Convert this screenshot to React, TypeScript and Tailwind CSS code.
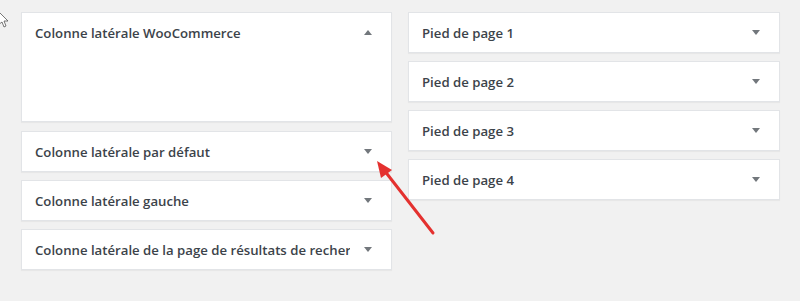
import React from "react";

const font = { fontFamily: '"Open Sans", "Noto Sans", sans-serif' };

function Caret({ up }: { up?: boolean }) {
  return (
    <svg width="8" height="5" viewBox="0 0 8 5" className="shrink-0">
      {up ? <path d="M0 5 L4 0 L8 5 Z" fill="#72777c" /> : <path d="M0 0 L8 0 L4 5 Z" fill="#72777c" />}
    </svg>
  );
}

function Widget({ title, open, body }: { title: string; open?: boolean; body?: number }) {
  return (
    <div className="bg-white border border-[#e2e4e7] shadow-[0_1px_1px_rgba(0,0,0,0.04)]">
      <div className="flex h-[39px] items-center gap-[14px] pl-[13px] pr-[19px]">
        <h3 className="min-w-0 flex-1 overflow-hidden whitespace-nowrap pt-[3px] text-[13.2px] font-semibold text-[#3c434a]">{title}</h3>
        <Caret up={open} />
      </div>
      {body ? <div style={{ height: body }} /> : null}
    </div>
  );
}

export default function App() {
  const left = ["Colonne latérale par défaut", "Colonne latérale gauche", "Colonne latérale de la page de résultats de recherche"];
  const right = ["Pied de page 1", "Pied de page 2", "Pied de page 3", "Pied de page 4"];
  return (
    <div className="relative h-[301px] w-[800px] overflow-hidden bg-[#f1f1f1]" style={font}>
      <div className="flex gap-4 pl-[21px] pt-[12px]">
        <div className="flex w-[371px] flex-col gap-[8px]">
          <div className="mb-[1px]">
            <Widget title="Colonne latérale WooCommerce" open body={69} />
          </div>
          {left.map(t => (
            <Widget key={t} title={t} />
          ))}
        </div>
        <div className="flex w-[372px] flex-col gap-[8px]">
          {right.map(t => (
            <Widget key={t} title={t} />
          ))}
        </div>
      </div>

      {/* mouse cursor at the edge */}
      <svg className="absolute left-0 top-[11px]" width="10" height="18" viewBox="0 0 10 18">
        <path d="M-2 0 L8 10 L4 10 L6 15 L4 16 L2 11 L-2 14 Z" fill="#fff" stroke="#555" strokeWidth="0.8" />
      </svg>

      {/* red annotation arrow */}
      <svg className="absolute left-0 top-0" width="800" height="301" viewBox="0 0 800 301">
        <line x1="433" y1="233" x2="384" y2="170" stroke="#e4312f" strokeWidth="3" strokeLinecap="round" />
        <path d="M377 161 L392 170 L381 178 Z" fill="#e4312f" />
      </svg>
    </div>
  );
}
